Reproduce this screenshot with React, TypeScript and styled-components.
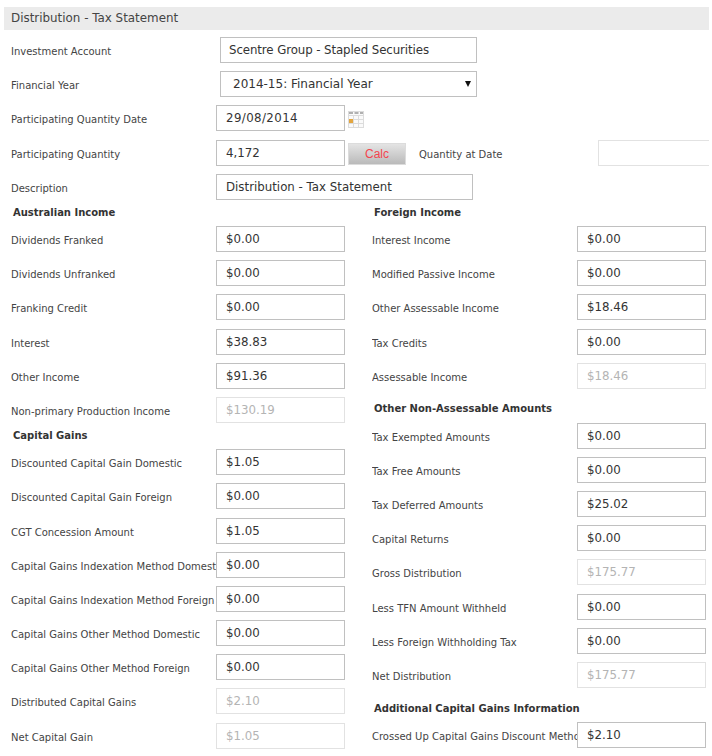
import React from 'react';
import styled, {createGlobalStyle} from 'styled-components';

const GlobalStyle = createGlobalStyle`
    html, body {
        margin: 0;
        padding: 0;
        background: #fff;
    }
    body {
        width: 712px;
        height: 756px;
        overflow: hidden;
        font-family: "DejaVu Sans", Verdana, sans-serif;
    }
`

type FieldType = {
    label: string
    value: string
    disabled?: boolean
}

const australianIncome: FieldType[] = [
    {label: 'Dividends Franked', value: '$0.00'},
    {label: 'Dividends Unfranked', value: '$0.00'},
    {label: 'Franking Credit', value: '$0.00'},
    {label: 'Interest', value: '$38.83'},
    {label: 'Other Income', value: '$91.36'},
    {label: 'Non-primary Production Income', value: '$130.19', disabled: true},
]

const capitalGains: FieldType[] = [
    {label: 'Discounted Capital Gain Domestic', value: '$1.05'},
    {label: 'Discounted Capital Gain Foreign', value: '$0.00'},
    {label: 'CGT Concession Amount', value: '$1.05'},
    {label: 'Capital Gains Indexation Method Domestic', value: '$0.00'},
    {label: 'Capital Gains Indexation Method Foreign', value: '$0.00'},
    {label: 'Capital Gains Other Method Domestic', value: '$0.00'},
    {label: 'Capital Gains Other Method Foreign', value: '$0.00'},
    {label: 'Distributed Capital Gains', value: '$2.10', disabled: true},
    {label: 'Net Capital Gain', value: '$1.05', disabled: true},
]

const foreignIncome: FieldType[] = [
    {label: 'Interest Income', value: '$0.00'},
    {label: 'Modified Passive Income', value: '$0.00'},
    {label: 'Other Assessable Income', value: '$18.46'},
    {label: 'Tax Credits', value: '$0.00'},
    {label: 'Assessable Income', value: '$18.46', disabled: true},
]

const otherAmounts: FieldType[] = [
    {label: 'Tax Exempted Amounts', value: '$0.00'},
    {label: 'Tax Free Amounts', value: '$0.00'},
    {label: 'Tax Deferred Amounts', value: '$25.02'},
    {label: 'Capital Returns', value: '$0.00'},
    {label: 'Gross Distribution', value: '$175.77', disabled: true},
    {label: 'Less TFN Amount Withheld', value: '$0.00'},
    {label: 'Less Foreign Withholding Tax', value: '$0.00'},
    {label: 'Net Distribution', value: '$175.77', disabled: true},
]

const additionalGains: FieldType[] = [
    {label: 'Crossed Up Capital Gains Discount Method', value: '$2.10'},
]

const CalendarIcon = () => (
    <svg width="16" height="17" viewBox="0 0 16 17">
        <rect x="0.5" y="0.5" width="15" height="16" fill="#fafafa" stroke="#dcdcdc"/>
        <path d="M1 2H5M6.5 2H10.5M12 2H15" stroke="#b0b0b0" strokeWidth="2" fill="none"/>
        <path d="M1 4.5H15M1 8.5H15M1 12.5H15M5.5 4V16M10.5 4V16" stroke="#dcdcdc" fill="none"/>
        <rect x="1" y="8" width="4" height="4" fill="#e3a63f"/>
    </svg>
)

const Section = ({title, fields, spaced}: {title: string, fields: FieldType[], spaced?: boolean}) => (
    <>
        <SectionTitle $spaced={spaced}>{title}</SectionTitle>
        {fields.map(f => (
            <Row key={f.label}>
                <ColumnLabel>{f.label}</ColumnLabel>
                <TextBox readOnly value={f.value} disabled={f.disabled}/>
            </Row>
        ))}
    </>
)

export default function App() {
    return (
        <Page>
            <GlobalStyle/>
            <Header>Distribution - Tax Statement</Header>
            <TopForm>
                <Row>
                    <TopLabel>Investment Account</TopLabel>
                    <WideBox readOnly value="Scentre Group - Stapled Securities"/>
                </Row>
                <Row>
                    <TopLabel>Financial Year</TopLabel>
                    <SelectWrap>
                        <YearSelect defaultValue="2014-15: Financial Year">
                            <option>2014-15: Financial Year</option>
                        </YearSelect>
                    </SelectWrap>
                </Row>
                <Row>
                    <ColumnLabel>Participating Quantity Date</ColumnLabel>
                    <DateBox readOnly value="29/08/2014"/>
                    <CalendarButton><CalendarIcon/></CalendarButton>
                </Row>
                <Row>
                    <ColumnLabel>Participating Quantity</ColumnLabel>
                    <TextBox readOnly value="4,172"/>
                    <CalcButton>Calc</CalcButton>
                    <QuantityLabel>Quantity at Date</QuantityLabel>
                    <ClippedBox disabled value=""/>
                </Row>
                <Row>
                    <ColumnLabel>Description</ColumnLabel>
                    <DescriptionBox readOnly value="Distribution - Tax Statement"/>
                </Row>
            </TopForm>
            <Columns>
                <LeftColumn>
                    <Section title="Australian Income" fields={australianIncome}/>
                    <Section title="Capital Gains" fields={capitalGains}/>
                </LeftColumn>
                <RightColumn>
                    <Section title="Foreign Income" fields={foreignIncome}/>
                    <Section title="Other Non-Assessable Amounts" fields={otherAmounts} spaced/>
                    <Section title="Additional Capital Gains Information" fields={additionalGains} spaced/>
                </RightColumn>
            </Columns>
        </Page>
    );
}

const Page = styled.div`
    width: 712px;
    height: 756px;
    overflow: hidden;
    padding: 7px 3px 0 4px;
    box-sizing: border-box;
    color: #444;
`

const Header = styled.div`
    height: 23px;
    line-height: 22px;
    background: #ebebeb;
    padding-left: 7px;
    font-size: 11.9px;
    color: #444;
`

const TopForm = styled.div`
    padding-top: 3px;
    padding-left: 7px;
`

const Row = styled.div`
    display: flex;
    align-items: center;
    height: 34.2px;
    min-width: 0;
`

const ColumnLabel = styled.label`
    flex: 0 0 205px;
    width: 205px;
    padding-top: 3px;
    overflow: hidden;
    white-space: nowrap;
    font-size: 10px;
    color: #444;
`

const TopLabel = styled(ColumnLabel)`
    flex-basis: 209px;
    width: 209px;
`

const TextBox = styled.input`
    flex: none;
    width: 129px;
    height: 26px;
    box-sizing: border-box;
    padding: 0 9px;
    border: 1px solid ${props => props.disabled ? '#e2e2e2' : '#c0c0c0'};
    background: #fff;
    outline: none;
    border-radius: 0;
    font-family: "DejaVu Sans", Verdana, sans-serif;
    font-size: 11.8px;
    color: ${props => props.disabled ? '#b4b4b4' : '#333'};
`

const DateBox = styled(TextBox)`
    letter-spacing: 0.4px;
`

const WideBox = styled(TextBox)`
    width: 257px;
    padding-left: 8px;
    letter-spacing: -0.1px;
`

const DescriptionBox = styled(TextBox)`
    width: 257px;
`

const ClippedBox = styled(TextBox)`
    width: 111px;
    border-right: none;
`

const SelectWrap = styled.div`
    position: relative;
    flex: none;
    width: 257px;
    height: 26px;

    &::after {
        content: "";
        position: absolute;
        right: 6px;
        top: 10px;
        border-left: 3px solid transparent;
        border-right: 3px solid transparent;
        border-top: 6px solid #111;
    }
`

const YearSelect = styled.select`
    display: block;
    appearance: none;
    width: 100%;
    height: 100%;
    box-sizing: border-box;
    padding: 0 12px;
    border: 1px solid #c0c0c0;
    background: #fff;
    border-radius: 0;
    font-family: "DejaVu Sans", Verdana, sans-serif;
    font-size: 12px;
    color: #333;
`

const CalendarButton = styled.span`
    display: flex;
    margin: 3px 0 0 3px;
`

const CalcButton = styled.button`
    flex: none;
    width: 58px;
    height: 22px;
    margin: 3px 0 0 3px;
    padding: 0;
    border: 1px solid #dcdcdc;
    background: linear-gradient(#e4e4e4, #bababa);
    font-family: "Liberation Sans", Arial, sans-serif;
    font-size: 12px;
    color: #f4444e;
`

const QuantityLabel = styled.span`
    flex: 0 0 192px;
    padding: 3px 0 0 13px;
    box-sizing: border-box;
    font-size: 10px;
    color: #444;
`

const Columns = styled.div`
    display: flex;
`

const LeftColumn = styled.div`
    flex: 0 0 368px;
    padding-left: 7px;
    box-sizing: border-box;
`

const RightColumn = styled.div`
    flex: 1;
    min-width: 0;
`

const SectionTitle = styled.div<{$spaced?: boolean}>`
    height: 18px;
    line-height: 17px;
    padding-left: 2px;
    margin-top: ${props => props.$spaced ? '7.6px' : '0'};
    font-size: 10px;
    font-weight: bold;
    color: #333;
`
